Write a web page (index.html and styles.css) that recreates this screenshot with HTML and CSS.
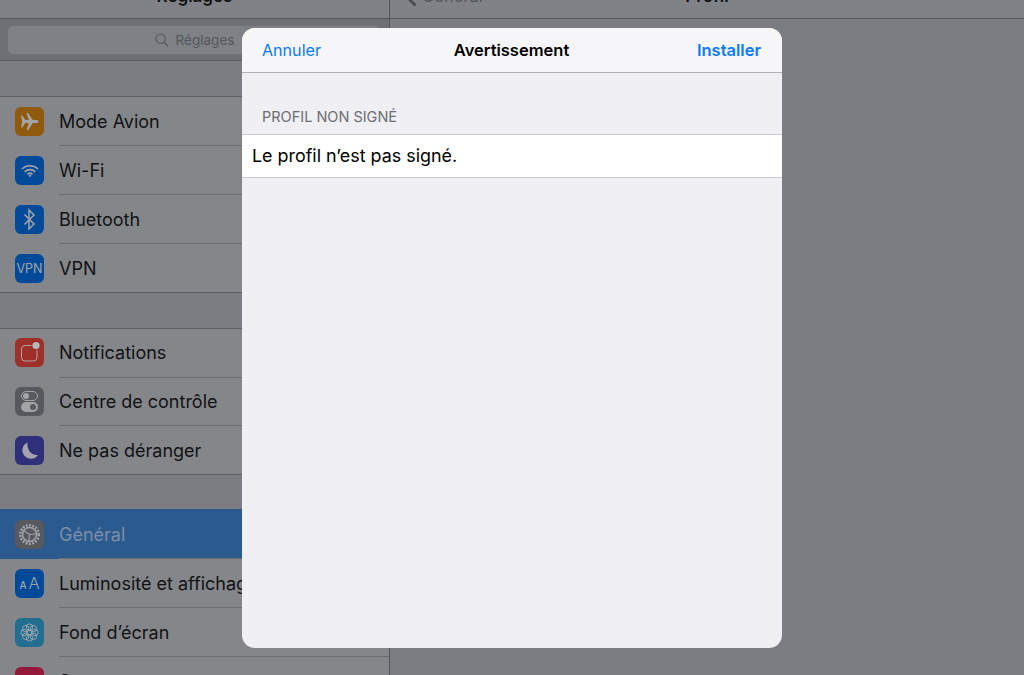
FILE: index.html
```html
<!DOCTYPE html>
<html lang="fr">
<head>
    <meta charset="UTF-8">
    <meta name="viewport" content="width=device-width, initial-scale=1.0">
    <title>Profil</title>
    <link rel="stylesheet" href="styles.css">
</head>
<body>
    <div class="app">
        <div class="sidebar">
            <div class="navbar"><span class="nav-title">Réglages</span></div>
            <div class="search-band">
                <div class="search-box">
                    <svg class="search-icon" width="14" height="14" viewBox="0 0 14 14"><circle cx="5.700" cy="5.700" r="4.700" fill="none" stroke="#58595d" stroke-width="1.100"/><path d="M9.200 9.200l4 4" stroke="#58595d" stroke-width="1.300" fill="none"/></svg>
                    <span>Réglages</span>
                </div>
            </div>

            <ul class="group">
                <li class="row">
                    <span class="icon icon-orange"><svg width="19" height="19" viewBox="0 0 19 19"><path d="M1 3.500h1.300l3 4.500h3.500L6.500 1h1.700l4.600 7h3.700c1.200 0 1.900.7 1.900 1.500s-.7 1.500-1.900 1.500h-3.700l-4.600 7H6.500l2.300-7H5.300l-3 4.500H1l1.200-6z" fill="#a3a4a7"/></svg></span>
                    <span class="label">Mode Avion</span>
                </li>
                <li class="row">
                    <span class="icon icon-blue"><svg width="18" height="14" viewBox="0 0 18 14"><path d="M1 5a11.500 11.500 0 0 1 16 0M3.800 7.800a7.500 7.500 0 0 1 10.400 0M6.500 10.300a3.700 3.700 0 0 1 5 0" fill="none" stroke="#a3a4a7" stroke-width="1.700"/><path d="M7.600 11.800L9 10.600l1.400 1.200L9 13.300z" fill="#a3a4a7"/></svg></span>
                    <span class="label">Wi-Fi</span>
                </li>
                <li class="row">
                    <span class="icon icon-blue"><svg width="13" height="23" viewBox="0 0 13 23"><path d="M1.500 6.500l9.500 9.500-5 5V2l5 5-9.500 9.500" fill="none" stroke="#a3a4a7" stroke-width="1.500"/></svg></span>
                    <span class="label">Bluetooth</span>
                </li>
                <li class="row">
                    <span class="icon icon-blue icon-text">VPN</span>
                    <span class="label">VPN</span>
                </li>
            </ul>

            <ul class="group group-compact">
                <li class="row">
                    <span class="icon icon-red"><svg width="29" height="29" viewBox="0 0 29 29"><rect x="6.500" y="7.500" width="15.500" height="15.500" rx="3.500" fill="none" stroke="#b8a0a0" stroke-width="1"/><circle cx="21" cy="7.500" r="4.500" fill="#9d3029"/><circle cx="21" cy="7.500" r="3.600" fill="#b8b8bb"/></svg></span>
                    <span class="label">Notifications</span>
                </li>
                <li class="row">
                    <span class="icon icon-gray"><svg width="23" height="23" viewBox="0 0 23 23"><rect x="3.500" y="1.500" width="16" height="9" rx="4.500" fill="none" stroke="#a3a4a7"/><circle cx="8" cy="6" r="3" fill="#a3a4a7"/><rect x="3" y="12" width="17" height="10" rx="5" fill="#a3a4a7"/><circle cx="15" cy="17" r="3" fill="#58595e"/></svg></span>
                    <span class="label">Centre de contrôle</span>
                </li>
                <li class="row">
                    <span class="icon icon-purple"><svg width="23" height="23" viewBox="0 0 23 23"><path d="M9.500 3.500a8.500 8.500 0 1 0 10.500 12.500c-6 1-11.500-4.500-10.500-12.500z" fill="#a3a4b0"/></svg></span>
                    <span class="label">Ne pas déranger</span>
                </li>
            </ul>

            <ul class="group group-selected">
                <li class="row row-selected">
                    <span class="icon icon-gray"><svg width="25" height="25" viewBox="0 0 25 25"><circle cx="12.500" cy="12.500" r="9.300" fill="none" stroke="#a3a4a7" stroke-width="2.400" stroke-dasharray="1.900 1.420"/><circle cx="12.500" cy="12.500" r="7" fill="none" stroke="#a3a4a7" stroke-width="1.600"/><path d="M12.500 12.500L6.800 8.500M12.500 12.500l7-.8M12.500 12.500l-.8 7" stroke="#a3a4a7" stroke-width="1.100" fill="none"/></svg></span>
                    <span class="label">Général</span>
                </li>
                <li class="row">
                    <span class="icon icon-blue icon-aa"><span class="aa-small">A</span><span class="aa-big">A</span></span>
                    <span class="label">Luminosité et affichage</span>
                </li>
                <li class="row">
                    <span class="icon icon-teal"><svg width="21" height="21" viewBox="0 0 23 23"><g fill="none" stroke="#a3a8ae" stroke-width="1"><circle cx="11.500" cy="11.500" r="2.600"/><circle cx="11.500" cy="5.600" r="3.500"/><circle cx="11.500" cy="17.400" r="3.500"/><circle cx="5.600" cy="11.500" r="3.500"/><circle cx="17.400" cy="11.500" r="3.500"/><circle cx="7.300" cy="7.300" r="3.500"/><circle cx="15.700" cy="7.300" r="3.500"/><circle cx="7.300" cy="15.700" r="3.500"/><circle cx="15.700" cy="15.700" r="3.500"/></g></svg></span>
                    <span class="label">Fond d’écran</span>
                </li>
                <li class="row">
                    <span class="icon icon-crimson"></span>
                    <span class="label">Sons</span>
                </li>
            </ul>
        </div>

        <div class="detail">
            <div class="navbar">
                <span class="nav-back">
                    <svg width="13" height="22" viewBox="0 0 13 22"><path d="M11.500 1.500L2 11l9.500 9.500" fill="none" stroke="#4a4b4f" stroke-width="2.800"/></svg>
                    Général
                </span>
                <span class="nav-title">Profil</span>
            </div>
        </div>
    </div>

    <div class="modal">
        <div class="modal-header">
            <span class="modal-link">Annuler</span>
            <span class="modal-title">Avertissement</span>
            <span class="modal-link modal-link-bold">Installer</span>
        </div>
        <div class="section-title">PROFIL NON SIGNÉ</div>
        <div class="section-row">Le profil n’est pas signé.</div>
    </div>
</body>
</html>
```

FILE: styles.css
```css
body {
    margin: 0;
    height: 675px;
    overflow: hidden;
    background-color: #7c7d82;
    font-family: Inter, "Liberation Sans", sans-serif;
    color: #111214;
}
ul {
    list-style: none;
    margin: 0;
    padding: 0;
}
.app {
    display: flex;
    margin-top: -26px;
}
.sidebar {
    width: 389px;
    border-right: 1px solid #55565a;
    flex-shrink: 0;
}
.detail {
    flex: 1;
}
.navbar {
    height: 44px;
    border-bottom: 1px solid #55565a;
    background-color: #818287;
    display: flex;
    align-items: center;
    justify-content: center;
    position: relative;
}
.nav-title {
    font-size: 17px;
    font-weight: 600;
}
.nav-back {
    position: absolute;
    left: 14px;
    top: 11px;
    display: flex;
    align-items: center;
    gap: 5px;
    font-size: 16.500px;
    color: #55565a;
}
.search-band {
    height: 42px;
    padding: 7px 8px 6px;
    box-sizing: border-box;
    background-color: #6f7075;
    border-bottom: 1px solid #5e5f63;
}
.search-box {
    height: 28px;
    border-radius: 5px;
    background-color: #808186;
    display: flex;
    align-items: center;
    justify-content: center;
    gap: 7px;
    font-size: 13.500px;
    color: #55565a;
}
.group {
    margin-top: 35px;
    border-top: 1px solid #5e5f63;
    background-color: #85868a;
}
.group-selected {
    margin-top: 34px;
    border-top-color: #2b5a8f;
}
.row {
    height: 49px;
    box-sizing: border-box;
    padding-left: 15px;
    display: flex;
    align-items: center;
    gap: 15px;
    font-size: 18px;
    position: relative;
}
.group-compact .row {
    height: 48.670px;
    padding-bottom: 1px;
}
.row::after {
    content: "";
    position: absolute;
    left: 59px;
    right: 0;
    bottom: 0;
    height: 1px;
    background-color: #6c6d71;
}
.group .row:last-child::after {
    left: 0;
    background-color: #5e5f63;
}
.row-selected {
    background-color: #2b5a8f;
    color: #7e8ea6;
}
.label {
    white-space: nowrap;
}
.icon {
    width: 29px;
    height: 29px;
    border-radius: 6px;
    display: flex;
    align-items: center;
    justify-content: center;
    flex-shrink: 0;
    color: #a3a4a7;
}
.icon-orange { background-color: #8f5a0c; }
.icon-blue { background-color: #004a99; }
.icon-red { background-color: #9d3029; }
.icon-gray { background-color: #58595e; }
.icon-purple { background-color: #30307a; }
.icon-teal { background-color: #226e91; }
.icon-crimson { background-color: #941a3c; }
.icon-text {
    font-size: 12.500px;
}
.icon-aa {
    align-items: baseline;
    gap: 2px;
    line-height: 29px;
}
.aa-small {
    font-size: 10px;
    font-weight: 500;
}
.aa-big {
    font-size: 16.500px;
    font-weight: 300;
}
.modal {
    position: absolute;
    left: 242px;
    top: 28px;
    width: 540px;
    height: 620px;
    border-radius: 13px;
    overflow: hidden;
    background-color: #efeff4;
}
.modal-header {
    height: 44px;
    border-bottom: 1px solid #b2b2b5;
    background-color: #f6f6f8;
    padding: 0 21px 0 20px;
    display: grid;
    grid-template-columns: 1fr auto 1fr;
    align-items: center;
    font-size: 16.500px;
}
.modal-link {
    color: #0a7aff;
    font-size: 16.100px;
}
.modal-link-bold {
    font-weight: 600;
    font-size: 16.500px;
    text-align: right;
}
.modal-title {
    font-weight: 600;
    color: #000;
}
.section-title {
    padding: 35px 20px 9px;
    font-size: 14.500px;
    line-height: 17px;
    color: #6d6d72;
}
.section-row {
    height: 40px;
    padding: 0 0 2px 10px;
    background-color: #fff;
    border-top: 1px solid #c8c7cc;
    border-bottom: 1px solid #c8c7cc;
    display: flex;
    align-items: center;
    font-size: 17.900px;
    color: #000;
}
```
